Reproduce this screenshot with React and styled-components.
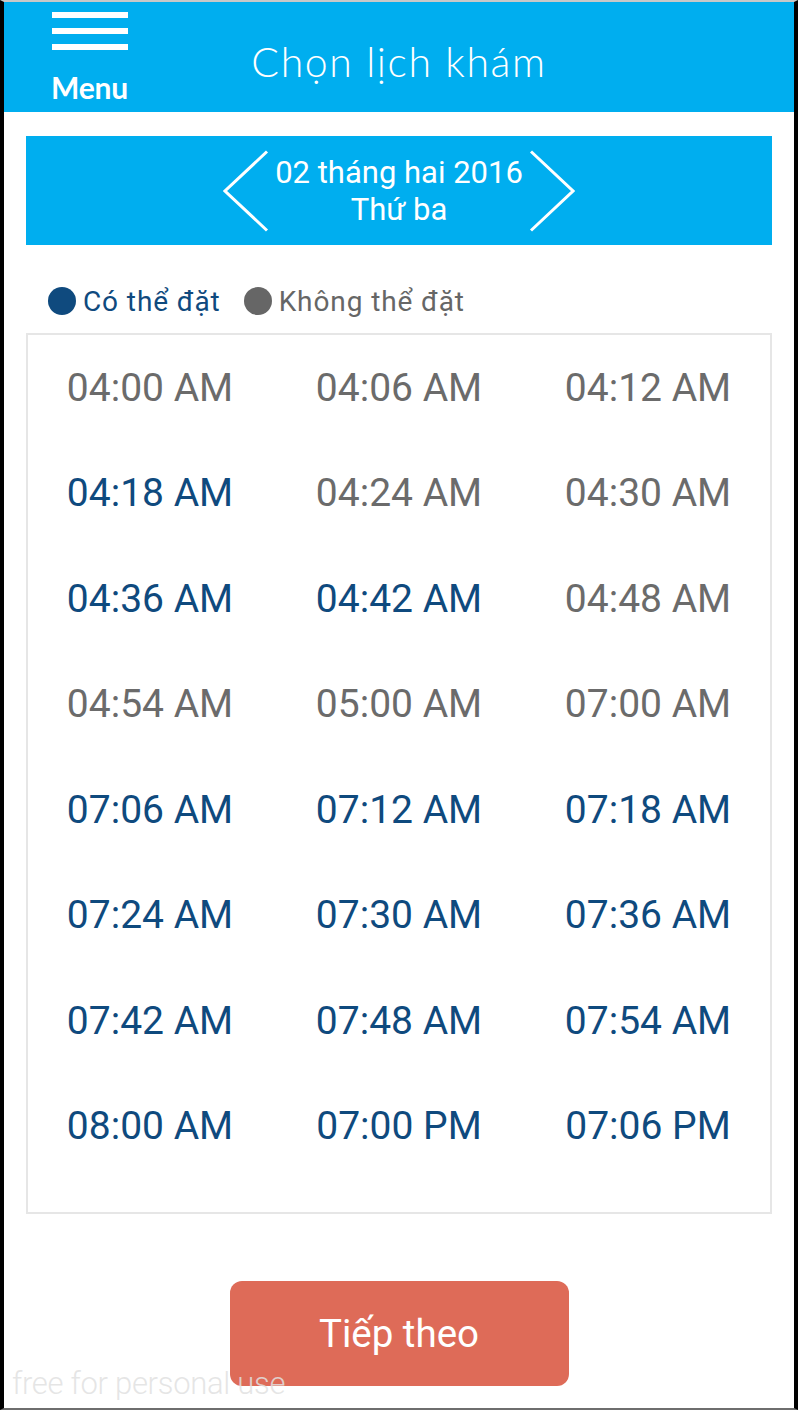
import React from "react";
import styled, { createGlobalStyle } from "styled-components";

const Global = createGlobalStyle`
  html, body { margin: 0; padding: 0; background: #fff; }
  body { font-family: Roboto, "Liberation Sans", sans-serif; }
  * { box-sizing: border-box; }
`;

const Frame = styled.div`
  position: relative;
  width: 798px;
  height: 1410px;
  background: #fff;
  border-top: 2px solid #c8c8c8;
  border-left: 4px solid #000;
  border-right: 4px solid #000;
  border-bottom: 2px solid #6e6e6e;
  overflow: hidden;
  display: flex;
  flex-direction: column;
`;

const Header = styled.header`
  height: 110px;
  background: #00aeef;
  display: grid;
  grid-template-columns: 1fr auto 1fr;
  align-items: start;
  color: #fff;
`;

const MenuButton = styled.div`
  padding: 10px 0 0 48px;
  display: flex;
  flex-direction: column;
  align-items: flex-start;
`;

const Bar = styled.span`
  display: block;
  width: 76px;
  height: 6px;
  background: #fff;
  margin-bottom: ${(p) => (p.$last ? "0" : "10px")};
`;

const MenuLabel = styled.span`
  font-family: Lato, "Open Sans", sans-serif;
  font-weight: 700;
  font-size: 30px;
  line-height: 30px;
  margin-top: 22px;
  margin-left: -1px;
  letter-spacing: -0.2px;
`;

const Title = styled.h1`
  margin: 0;
  padding-top: 36px;
  font-family: Lato, "Open Sans", sans-serif;
  font-weight: 300;
  font-size: 41px;
  line-height: 48px;
  letter-spacing: 1.6px;
  white-space: nowrap;
`;

const Main = styled.main`
  padding: 24px 22px 0;
  display: flex;
  flex-direction: column;
`;

const DateBar = styled.div`
  height: 109px;
  background: #00aeef;
  display: flex;
  align-items: center;
  justify-content: center;
  color: #fff;
`;

const NavArrow = styled.svg`
  width: 46px;
  height: 84px;
  display: block;
  margin-top: 2px;
`;

const DateText = styled.div`
  text-align: center;
  font-family: Roboto, sans-serif;
  font-size: 31px;
  line-height: 37px;
  width: 260px;
  white-space: nowrap;
`;

const Legend = styled.div`
  display: flex;
  align-items: center;
  height: 36px;
  margin-top: 38px;
  padding-left: 22px;
  gap: 23px;
`;

const LegendItem = styled.div`
  display: flex;
  align-items: center;
  gap: 7px;
  color: ${(p) => p.$color};
  font-family: Roboto, sans-serif;
  font-size: 28px;
  letter-spacing: 0.9px;
`;

const Dot = styled.span`
  width: 28px;
  height: 28px;
  border-radius: 50%;
  background: ${(p) => p.$color};
`;

const SlotBox = styled.div`
  margin-top: 14px;
  border: 2px solid #e6e6e6;
  height: 881px;
  display: grid;
  grid-template-columns: repeat(3, 249px);
  justify-content: center;
  grid-auto-rows: 105.5px;
  align-items: center;
  justify-items: center;
  overflow: hidden;
`;

const Slot = styled.div`
  font-family: Roboto, sans-serif;
  font-size: 39px;
  color: ${(p) => (p.$available ? "#0f4a7e" : "#6b6b6b")};
  white-space: nowrap;
`;

const Footer = styled.div`
  display: flex;
  justify-content: center;
  margin-top: 67px;
`;

const NextButton = styled.button`
  width: 339px;
  height: 105px;
  border: none;
  border-radius: 12px;
  background: #de6b58;
  color: #fff;
  font-family: Roboto, sans-serif;
  font-size: 38.5px;
  padding: 0;
`;

const Watermark = styled.div`
  position: absolute;
  left: 8px;
  bottom: 6px;
  font-family: Roboto, sans-serif;
  font-weight: 300;
  font-size: 31px;
  color: rgba(225, 225, 225, 0.85);
  letter-spacing: -0.3px;
  pointer-events: none;
`;

const slots = [
  ["04:00 AM", 0], ["04:06 AM", 0], ["04:12 AM", 0],
  ["04:18 AM", 1], ["04:24 AM", 0], ["04:30 AM", 0],
  ["04:36 AM", 1], ["04:42 AM", 1], ["04:48 AM", 0],
  ["04:54 AM", 0], ["05:00 AM", 0], ["07:00 AM", 0],
  ["07:06 AM", 1], ["07:12 AM", 1], ["07:18 AM", 1],
  ["07:24 AM", 1], ["07:30 AM", 1], ["07:36 AM", 1],
  ["07:42 AM", 1], ["07:48 AM", 1], ["07:54 AM", 1],
  ["08:00 AM", 1], ["07:00 PM", 1], ["07:06 PM", 1],
];

export default function App() {
  return (
    <>
      <Global />
      <Frame>
        <Header>
          <MenuButton>
            <Bar />
            <Bar />
            <Bar $last />
            <MenuLabel>Menu</MenuLabel>
          </MenuButton>
          <Title>Chọn lịch khám</Title>
          <div />
        </Header>
        <Main>
          <DateBar>
            <NavArrow viewBox="0 0 46 84">
              <polyline points="44,1.5 2,41 44,80.5" fill="none" stroke="#fff" strokeWidth="3" />
            </NavArrow>
            <DateText>
              02 tháng hai 2016
              <br />
              Thứ ba
            </DateText>
            <NavArrow viewBox="0 0 46 84">
              <polyline points="2,1.5 44,41 2,80.5" fill="none" stroke="#fff" strokeWidth="3" />
            </NavArrow>
          </DateBar>
          <Legend>
            <LegendItem $color="#0f4a7e">
              <Dot $color="#0f4a7e" />
              Có thể đặt
            </LegendItem>
            <LegendItem $color="#666">
              <Dot $color="#666" />
              Không thể đặt
            </LegendItem>
          </Legend>
          <SlotBox>
            {slots.map(([t, a]) => (
              <Slot key={t + a} $available={!!a}>{t}</Slot>
            ))}
          </SlotBox>
          <Footer>
            <NextButton>Tiếp theo</NextButton>
          </Footer>
        </Main>
        <Watermark>free for personal use</Watermark>
      </Frame>
    </>
  );
}
